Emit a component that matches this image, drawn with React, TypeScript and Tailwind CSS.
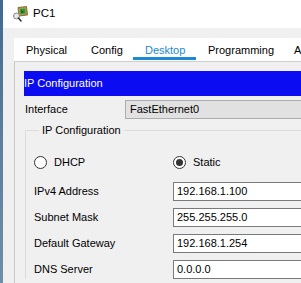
import React from "react";

const font = { fontFamily: '"Liberation Sans", Arial, sans-serif' };

const tabs = [
  { label: "Physical", w: "w-[65px]" },
  { label: "Config", w: "w-[54px]" },
  { label: "Desktop", w: "w-[63px]", active: true },
  { label: "Programming", w: "w-[86px]" },
  { label: "Attributes", w: "w-[80px]" },
];

const fields = [
  { label: "IPv4 Address", value: "192.168.1.100" },
  { label: "Subnet Mask", value: "255.255.255.0" },
  { label: "Default Gateway", value: "192.168.1.254" },
  { label: "DNS Server", value: "0.0.0.0" },
];

const PcIcon = () => (
  <svg width="16" height="16" viewBox="0 0 16 16">
    <path d="M6 1.5 L14.5 0.5 L15.5 9 L7 10 Z" fill="#b59a4a" stroke="#6b5a20" strokeWidth="0.8" />
    <path d="M8 3 L13 2.5 L13.5 7.5 L8.5 8 Z" fill="#2e9a3a" />
    <path d="M9 4 L12 6 L9.5 7 Z" fill="#0e5a18" />
    <circle cx="4.5" cy="10" r="3" fill="#e8e8e8" stroke="#8a8a8a" strokeWidth="1" />
    <path d="M6.5 12 L9 15" stroke="#333" strokeWidth="1.6" strokeLinecap="round" />
  </svg>
);

const Radio = ({ checked, label }: { checked?: boolean; label: string }) => (
  <div className="flex items-center gap-[7px]">
    <div className="w-[13px] h-[13px] rounded-full border border-[#333] bg-white flex items-center justify-center">
      {checked && <div className="w-[7px] h-[7px] rounded-full bg-[#333]" />}
    </div>
    <span className="text-[11px] text-black">{label}</span>
  </div>
);

export default function App() {
  return (
    <div className="w-[301px] h-[283px] overflow-hidden flex bg-[#f0f0f0]" style={font}>
      <div className="w-[3px] shrink-0 bg-gradient-to-b from-[#3f6a92] via-[#5d7f9d] to-[#6f8ea8]" />
      <div className="flex flex-col shrink-0 w-[340px]">
        <div className="h-[28px] bg-white flex items-center pl-[9px] gap-[5px]">
          <PcIcon />
          <span className="text-[11.5px] text-black">PC1</span>
        </div>
        <div className="flex-1 bg-[#f0f0f0] pt-[10px] pl-[11px]">
          <div className="h-[24px] bg-white border-b border-[#cfcfcf] flex">
            {tabs.map((t) => (
              <div
                key={t.label}
                className={`${t.w} shrink-0 pl-[12px] pt-[2px] flex items-center relative text-[11px] ${
                  t.active ? "text-[#1a8ad4]" : "text-black"
                }`}
              >
                {t.label}
                {t.active && <div className="absolute left-0 right-0 bottom-[1px] h-[3px] bg-[#1a8ad4]" />}
              </div>
            ))}
          </div>
          <div className="border-l border-[#c8c8c8] h-full pl-[9px] pt-[9px]">
            <div className="h-[25px] bg-[#0c0cf2] text-white text-[11px] flex items-center">
              IP Configuration
            </div>
            <div className="flex items-center mt-[4px] h-[19px]">
              <span className="w-[101px] pl-[1px] text-[11px] text-black">Interface</span>
              <div className="flex-1 h-[19px] bg-[#e1e1e1] border border-[#adadad] pl-[4px] flex items-center text-[11px] text-black">
                FastEthernet0
              </div>
            </div>
            <fieldset className="mt-[5px] ml-[1px] border-l border-t border-[#dcdcdc] pl-[8px]">
              <legend className="ml-[5px] px-[3px] text-[11px] text-black leading-[13px]">IP Configuration</legend>
              <div className="flex items-center h-[13px] mt-[19px]">
                <div className="w-[139px]">
                  <Radio label="DHCP" />
                </div>
                <Radio checked label="Static" />
              </div>
              <div className="flex flex-col gap-[7px] mt-[13px]">
                {fields.map((f) => (
                  <div key={f.label} className="flex items-center h-[19px]">
                    <span className="w-[139px] text-[11px] text-black">{f.label}</span>
                    <div className="flex-1 h-[19px] bg-white border border-[#7a7a7a] pl-[3px] flex items-center text-[11px] text-black">
                      {f.value}
                    </div>
                  </div>
                ))}
              </div>
            </fieldset>
          </div>
        </div>
      </div>
    </div>
  );
}
